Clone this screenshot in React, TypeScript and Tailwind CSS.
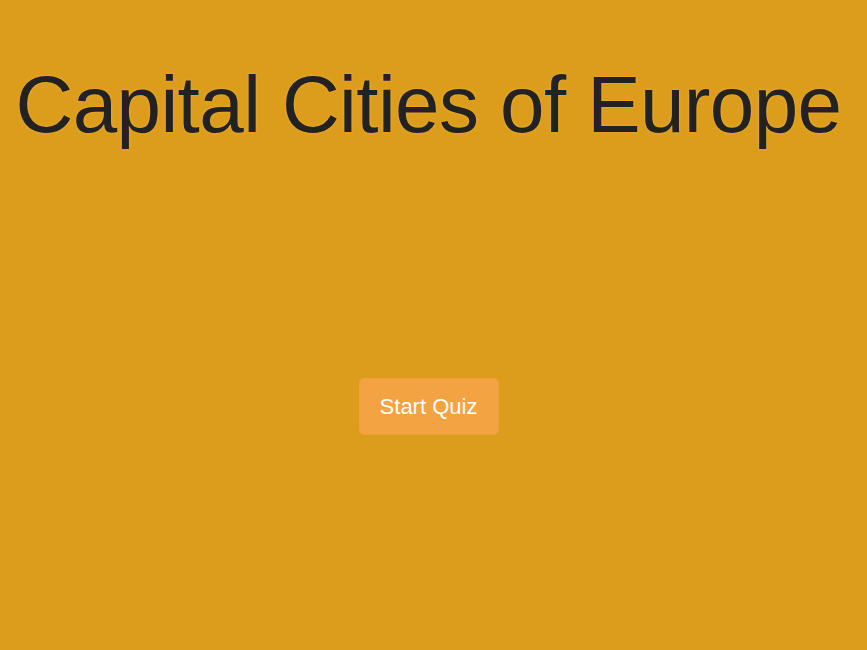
import React from "react";

export default function App() {
  return (
    <div
      className="min-h-[650px] w-full bg-[#dc9d1c] flex flex-col items-center pr-[10px]"
      style={{ fontFamily: '"Liberation Sans", Arial, sans-serif' }}
    >
      <h1 className="mt-[55px] text-[80px] leading-[100px] tracking-[-0.6px] text-[#222222] [text-shadow:0_0_3px_#f0b030] whitespace-nowrap">
        Capital Cities of Europe
      </h1>
      <button className="mt-[223px] w-[140px] h-[57px] rounded-[5px] bg-[#f4a343] text-white text-[22px] border border-[#f0a040]">
        Start Quiz
      </button>
    </div>
  );
}
